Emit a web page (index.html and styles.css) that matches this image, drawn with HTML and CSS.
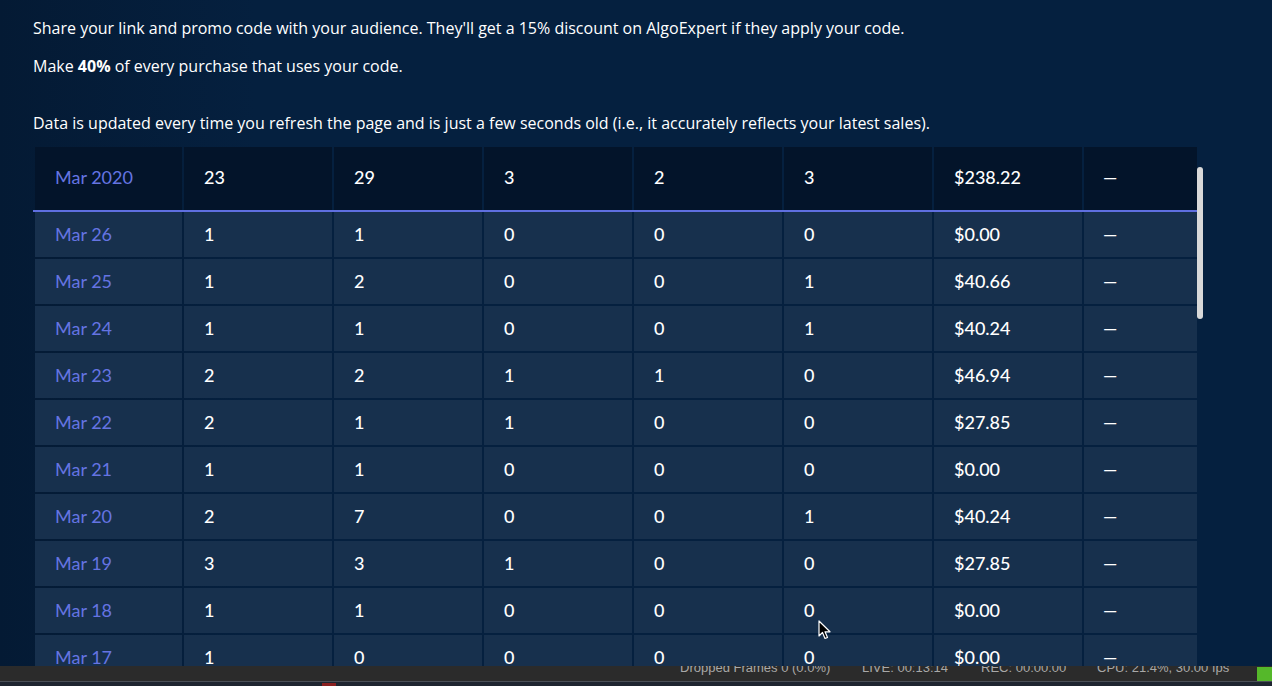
FILE: index.html
```html
<!DOCTYPE html>
<html lang="en">
<head>
<meta charset="utf-8">
<title>Affiliate</title>
<link rel="stylesheet" href="styles.css">
</head>
<body>
<main class="page">
  <p class="intro">Share your link and promo code with your audience. They'll get a 15% discount on AlgoExpert if they apply your code.</p>
  <p class="intro">Make <strong>40%</strong> of every purchase that uses your code.</p>
  <p class="intro note">Data is updated every time you refresh the page and is just a few seconds old (i.e., it accurately reflects your latest sales).</p>

  <div class="table-wrap">
    <div class="row head">
      <div class="cell date">Mar 2020</div><div class="cell">23</div><div class="cell">29</div><div class="cell">3</div><div class="cell">2</div><div class="cell">3</div><div class="cell">$238.22</div><div class="cell dash">—</div><div class="cell"></div>
    </div>
    <div class="divider"></div>
    <div class="body">
      <div class="row"><div class="cell date">Mar 26</div><div class="cell">1</div><div class="cell">1</div><div class="cell">0</div><div class="cell">0</div><div class="cell">0</div><div class="cell">$0.00</div><div class="cell dash">—</div><div class="cell"></div></div>
      <div class="row"><div class="cell date">Mar 25</div><div class="cell">1</div><div class="cell">2</div><div class="cell">0</div><div class="cell">0</div><div class="cell">1</div><div class="cell">$40.66</div><div class="cell dash">—</div><div class="cell"></div></div>
      <div class="row"><div class="cell date">Mar 24</div><div class="cell">1</div><div class="cell">1</div><div class="cell">0</div><div class="cell">0</div><div class="cell">1</div><div class="cell">$40.24</div><div class="cell dash">—</div><div class="cell"></div></div>
      <div class="row"><div class="cell date">Mar 23</div><div class="cell">2</div><div class="cell">2</div><div class="cell">1</div><div class="cell">1</div><div class="cell">0</div><div class="cell">$46.94</div><div class="cell dash">—</div><div class="cell"></div></div>
      <div class="row"><div class="cell date">Mar 22</div><div class="cell">2</div><div class="cell">1</div><div class="cell">1</div><div class="cell">0</div><div class="cell">0</div><div class="cell">$27.85</div><div class="cell dash">—</div><div class="cell"></div></div>
      <div class="row"><div class="cell date">Mar 21</div><div class="cell">1</div><div class="cell">1</div><div class="cell">0</div><div class="cell">0</div><div class="cell">0</div><div class="cell">$0.00</div><div class="cell dash">—</div><div class="cell"></div></div>
      <div class="row"><div class="cell date">Mar 20</div><div class="cell">2</div><div class="cell">7</div><div class="cell">0</div><div class="cell">0</div><div class="cell">1</div><div class="cell">$40.24</div><div class="cell dash">—</div><div class="cell"></div></div>
      <div class="row"><div class="cell date">Mar 19</div><div class="cell">3</div><div class="cell">3</div><div class="cell">1</div><div class="cell">0</div><div class="cell">0</div><div class="cell">$27.85</div><div class="cell dash">—</div><div class="cell"></div></div>
      <div class="row"><div class="cell date">Mar 18</div><div class="cell">1</div><div class="cell">1</div><div class="cell">0</div><div class="cell">0</div><div class="cell">0</div><div class="cell">$0.00</div><div class="cell dash">—</div><div class="cell"></div></div>
      <div class="row"><div class="cell date">Mar 17</div><div class="cell">1</div><div class="cell">0</div><div class="cell">0</div><div class="cell">0</div><div class="cell">0</div><div class="cell">$0.00</div><div class="cell dash">—</div><div class="cell"></div></div>
    </div>
    <div class="scroll-thumb"></div>
  </div>
</main>

<svg class="cursor" width="14" height="21" viewBox="0 0 14 21" aria-hidden="true">
  <path d="M1 1 L1 16 L4.5 12.5 L7 18.5 L9.5 17.5 L7 11.8 L12 11.8 Z" fill="#000" stroke="#fff" stroke-width="1.2" stroke-linejoin="round"/>
</svg>

<footer class="obs">
  <div class="obs-bar">
    <span class="stat s1">Dropped Frames 0 (0.0%)</span>
    <span class="stat s2">LIVE: 00:13:14</span>
    <span class="stat s3">REC: 00:00:00</span>
    <span class="stat s4">CPU: 21.4%, 30.00 fps</span>
    <span class="green"></span>
  </div>
  <div class="obs-strip"><span class="rec-dot"></span></div>
</footer>
</body>
</html>
```

FILE: styles.css
```css
html, body {
  margin: 0;
  padding: 0;
  height: 100%;
  overflow: hidden;
}

body {
  background: linear-gradient(90deg, #041a34 0%, #05203f 20%, #05203f 100%);
  color: #ffffff;
  font-family: "Open Sans", "Liberation Sans", sans-serif;
}

.page {
  padding: 17px 0 0 33px;
}

.intro {
  margin: 0 0 16px 0;
  font-size: 16px;
  line-height: 22px;
}

.intro strong {
  font-weight: 700;
}

.intro.note {
  margin-top: 35px;
  margin-bottom: 13px;
}

.table-wrap {
  position: relative;
  width: 1164px;
  font-family: Lato, "Liberation Sans", sans-serif;
  font-size: 18px;
  font-weight: 500;
}

.row {
  display: flex;
  gap: 2px;
  padding-left: 2px;
  overflow: hidden;
  width: 1162px;
}

.cell {
  flex: 0 0 148px;
  height: 45px;
  padding: 0 0 2px 20px;
  box-sizing: border-box;
  display: flex;
  align-items: center;
  background: #17304d;
  color: #ffffff;
  white-space: nowrap;
}

.cell:first-child {
  flex-basis: 147px;
}

.head .cell {
  height: 63px;
  padding-bottom: 4px;
  background: #03142a;
}

.date {
  color: #6574e2;
  font-weight: 400;
}

.dash {
  padding-left: 19px;
  transform-origin: left center;
}

.divider {
  height: 2px;
  background: #5f6fe0;
}

.body {
  display: flex;
  flex-direction: column;
  gap: 2px;
}

.scroll-thumb {
  position: absolute;
  left: 1164px;
  top: 20px;
  width: 6px;
  height: 152px;
  border-radius: 3px;
  background: #d9d9d9;
}

.cursor {
  position: fixed;
  left: 818px;
  top: 620px;
}

.obs {
  position: fixed;
  left: 0;
  right: 0;
  bottom: 0;
  height: 20px;
}

.obs-bar {
  position: relative;
  height: 15px;
  background: #2b2b2b;
  overflow: hidden;
  font-family: "Liberation Sans", Arial, sans-serif;
  font-size: 13px;
  color: #a8a8a8;
}

.stat {
  position: absolute;
  top: -6px;
  line-height: 15px;
  white-space: nowrap;
}

.s1 { left: 680px; }
.s2 { left: 862px; }
.s3 { left: 981px; }
.s4 { left: 1097px; }

.green {
  position: absolute;
  left: 1257px;
  top: 1px;
  width: 15px;
  height: 14px;
  background: #55b82a;
}

.obs-strip {
  position: relative;
  height: 5px;
  background: #1e2530;
  border-top: 1px solid #4a4f57;
  box-sizing: border-box;
}

.rec-dot {
  position: absolute;
  left: 322px;
  top: 1px;
  width: 14px;
  height: 4px;
  background: #8a2020;
}
```
